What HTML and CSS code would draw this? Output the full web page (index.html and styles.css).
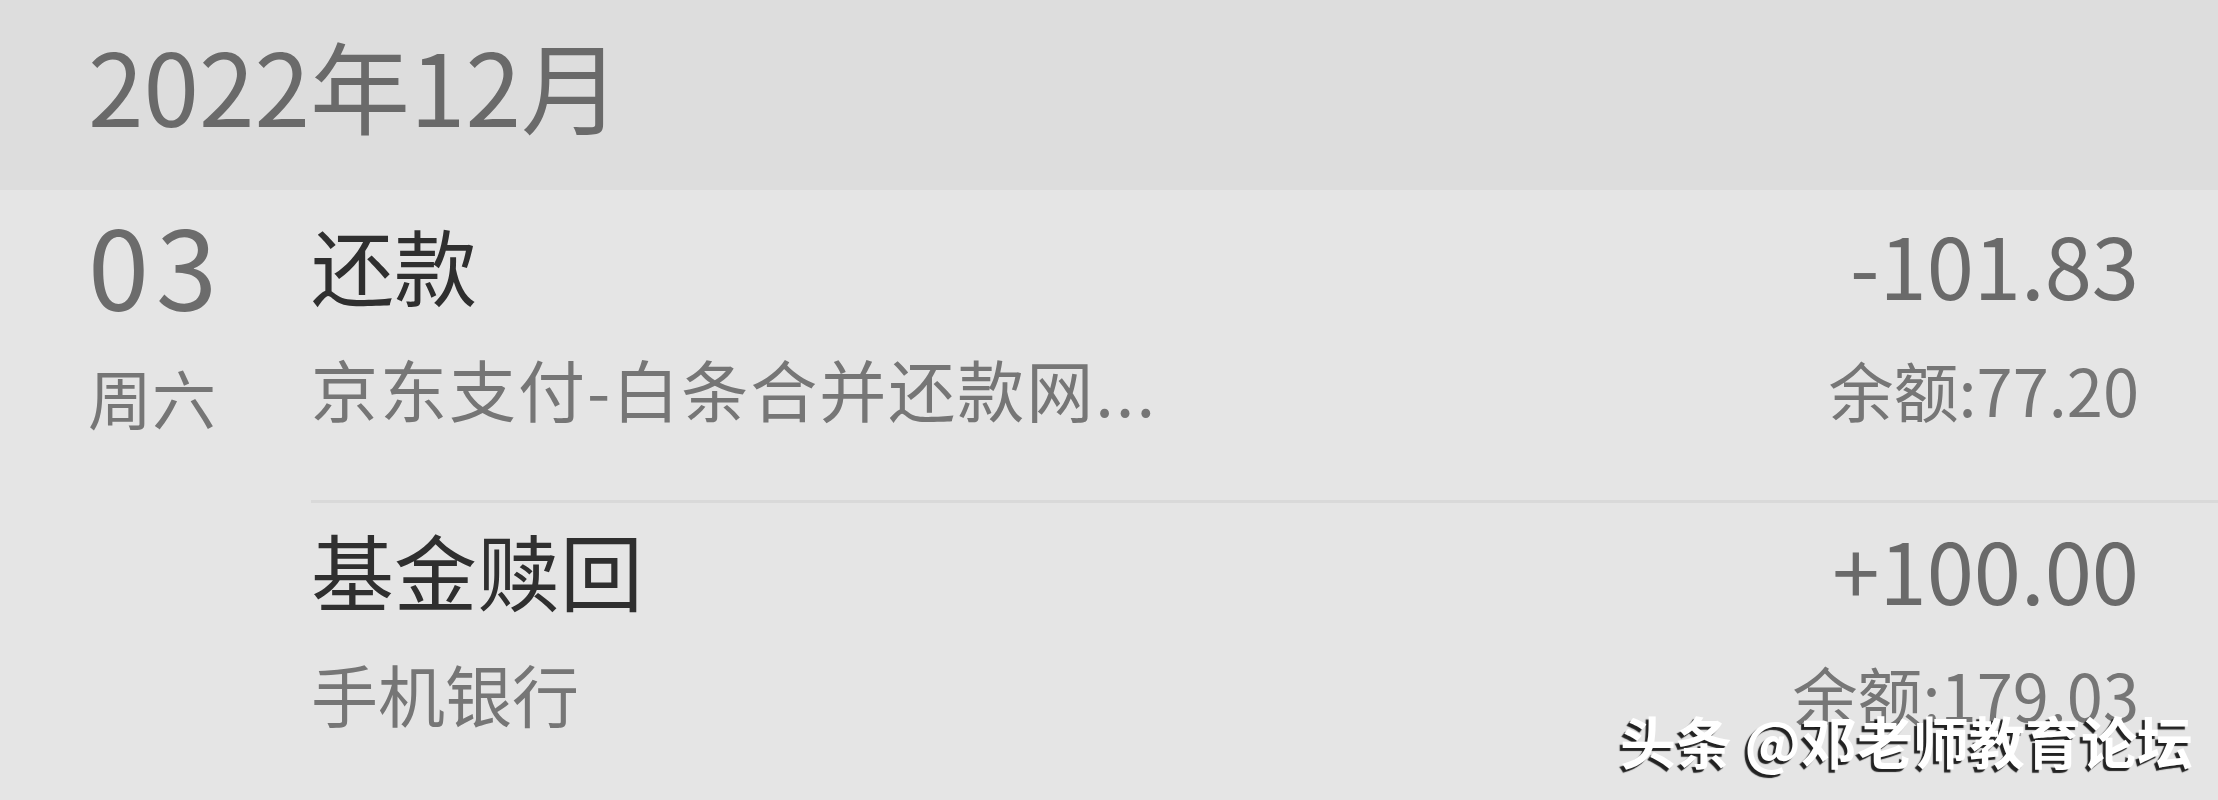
FILE: index.html
```html
<!DOCTYPE html>
<html lang="zh-CN">
<head>
<meta charset="utf-8">
<title>账单明细</title>
<link rel="stylesheet" href="styles.css">
</head>
<body>
<div class="page">
  <header class="month">2022年12月</header>
  <section class="day">
    <div class="date">
      <div class="date-num">03</div>
      <div class="date-week">周六</div>
    </div>
    <div class="items">
      <div class="item">
        <div class="line-main">
          <span class="title">还款</span>
          <span class="amount">-101.83</span>
        </div>
        <div class="line-sub">
          <span class="desc desc-long">京东支付-白条合并还款网...</span>
          <span class="balance">余额:77.20</span>
        </div>
      </div>
      <div class="item">
        <div class="line-main">
          <span class="title">基金赎回</span>
          <span class="amount">+100.00</span>
        </div>
        <div class="line-sub">
          <span class="desc">手机银行</span>
          <span class="balance">余额:179.03</span>
        </div>
      </div>
    </div>
  </section>
  <div class="watermark">头条 @邓老师教育论坛</div>
</div>
</body>
</html>
```
FILE: styles.css
```css
html, body {
  margin: 0;
  padding: 0;
  height: 800px;
  overflow: hidden;
}

body {
  background: #e5e5e5;
  font-family: "Noto Sans CJK SC", "Noto Sans", sans-serif;
  color: #707070;
}

.page {
  position: relative;
  width: 2218px;
  height: 800px;
}

.month {
  box-sizing: border-box;
  height: 190px;
  background: #dddddd;
  padding: 34px 0 0 88px;
  font-size: 100px;
  line-height: 1;
  color: #6a6a6a;
  font-weight: 400;
}

.day {
  display: flex;
}

.date {
  box-sizing: border-box;
  width: 311px;
  padding-left: 88px;
}

.date-num {
  margin-top: 18px;
  font-size: 110px;
  line-height: 1;
  font-weight: 400;
  letter-spacing: 7px;
  color: #6c6c6c;
}

.date-week {
  margin-top: 46px;
  font-size: 64px;
  line-height: 1;
  font-weight: 400;
  color: #767676;
}

.items {
  flex: 1;
}

.item {
  box-sizing: border-box;
  height: 310px;
  padding-top: 30px;
}

.item + .item {
  border-top: 3px solid #d9d9d9;
  padding-top: 22px;
}

.line-main,
.line-sub {
  display: flex;
  justify-content: space-between;
  align-items: baseline;
  padding-right: 79px;
}

.line-sub {
  margin-top: 48px;
}

.title {
  font-size: 83px;
  line-height: 1;
  color: #2f2f2f;
}

.amount {
  font-size: 85px;
  line-height: 1;
  font-weight: 400;
  color: #6a6a6a;
}

.desc,
.balance {
  font-size: 67px;
  line-height: 1;
  font-weight: 400;
  color: #767676;
}

.balance {
  font-size: 65px;
}

.desc-long {
  letter-spacing: 2px;
}

.watermark {
  position: absolute;
  right: 25px;
  top: 712px;
  font-size: 56px;
  line-height: 1;
  font-weight: 700;
  color: #ffffff;
  text-shadow: -3px 3px 1px rgba(0, 0, 0, 0.85);
  white-space: nowrap;
}
```
